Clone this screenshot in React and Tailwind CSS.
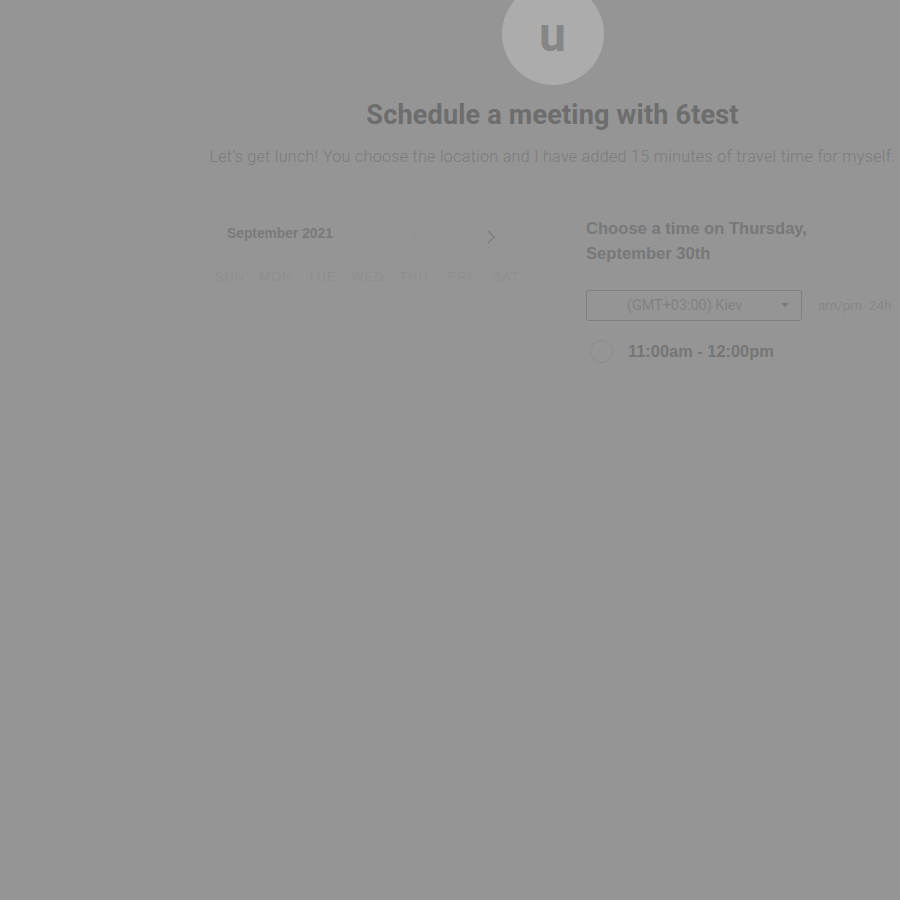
export default function App() {
  const days = [
    [null, null, null, 1, 2, 3, 4],
    [5, 6, 7, 8, 9, 10, 11],
    [12, 13, 14, 15, 16, 17, 18],
    [19, 20, 21, 22, 23, 24, 25],
    [26, 27, 28, 29, 30, null, null],
  ];
  const week = ["SUN", "MON", "TUE", "WED", "THU", "FRI", "SAT"];
  return (
    <div className="w-[900px] h-[900px] overflow-hidden bg-[#959595] flex" style={{ fontFamily: "Roboto, 'Liberation Sans', sans-serif" }}>
      <div className="w-[205px] shrink-0" />
      <div className="flex-1 flex flex-col">
        <div className="flex flex-col items-center">
          <div className="-mt-[17px] w-[102px] h-[102px] rounded-full bg-[#acacac] flex items-center justify-center">
            <span className="text-[48px] font-bold text-[#868686] leading-none mt-[2px]" style={{ fontFamily: "Roboto, sans-serif" }}>u</span>
          </div>
          <h1 className="mt-[14px] h-[32px] leading-[32px] text-[27px] font-bold text-[#6d6d6d] tracking-[0.2px]">Schedule a meeting with 6test</h1>
          <p className="mt-[16px] h-[20px] leading-[20px] text-[16px] font-light text-[#7b7b7b] whitespace-nowrap tracking-[0.33px]">
            Let’s get lunch! You choose the location and I have added 15 minutes of travel time for myself.
          </p>
        </div>
        <div className="flex mt-[49px] pl-[2px]" style={{ fontFamily: "'Liberation Sans', Arial, sans-serif" }}>
          <div className="w-[322px]">
            <div className="h-[43px] flex items-center pb-[6px] relative">
              <span className="pl-[20px] text-[13.8px] font-bold text-[#7a7a7a]">September 2021</span>
              <svg className="absolute left-[203px] top-[13px]" width="10" height="16" viewBox="0 0 10 16" fill="none" stroke="#939393" strokeWidth="1.5"><path d="M8 2 L2 8 L8 14" /></svg>
              <svg className="absolute left-[279px] top-[13px]" width="10" height="16" viewBox="0 0 10 16" fill="none" stroke="#7f7f7f" strokeWidth="1.5"><path d="M2 2 L8 8 L2 14" /></svg>
            </div>
            <div className="grid grid-cols-7 h-[36px] items-center">
              {week.map((w) => (
                <div key={w} className="text-center text-[13px] tracking-[1px] text-[#8f8f8f]">{w}</div>
              ))}
            </div>
            {days.map((row, i) => (
              <div key={i} className="grid grid-cols-7 h-[62px] items-center">
                {row.map((d, j) => (
                  <div key={j} className="text-center text-[15px] text-[#979797]">{d ?? ""}</div>
                ))}
              </div>
            ))}
          </div>
          <div className="ml-[57px] flex flex-col">
            <h2 className="text-[16.6px] leading-[25px] font-bold text-[#787878]">
              Choose a time on Thursday,<br />September 30th
            </h2>
            <div className="mt-[24px] flex items-center">
              <div className="w-[216px] h-[31px] border border-[#7f7f7f] rounded-[3px] flex items-center pl-[40px] pr-[12px] justify-between">
                <span className="text-[14.4px] text-[#828282]" style={{ fontFamily: "Roboto, sans-serif" }}>(GMT+03:00) Kiev</span>
                <svg width="8" height="5" viewBox="0 0 8 5"><path d="M0 0 L8 0 L4 4 Z" fill="#7a7a7a" /></svg>
              </div>
              <span className="ml-[16px] text-[13.5px] text-[#878787] whitespace-nowrap" style={{ fontFamily: "Roboto, sans-serif" }}>am/pm&nbsp; 24h</span>
            </div>
            <div className="mt-[18px] flex items-center">
              <div className="ml-[4px] w-[23px] h-[23px] rounded-full border border-[#8c8c8c]" />
              <span className="ml-[15px] text-[16.4px] font-bold text-[#767676]">11:00am - 12:00pm</span>
            </div>
          </div>
        </div>
      </div>
    </div>
  );
}
